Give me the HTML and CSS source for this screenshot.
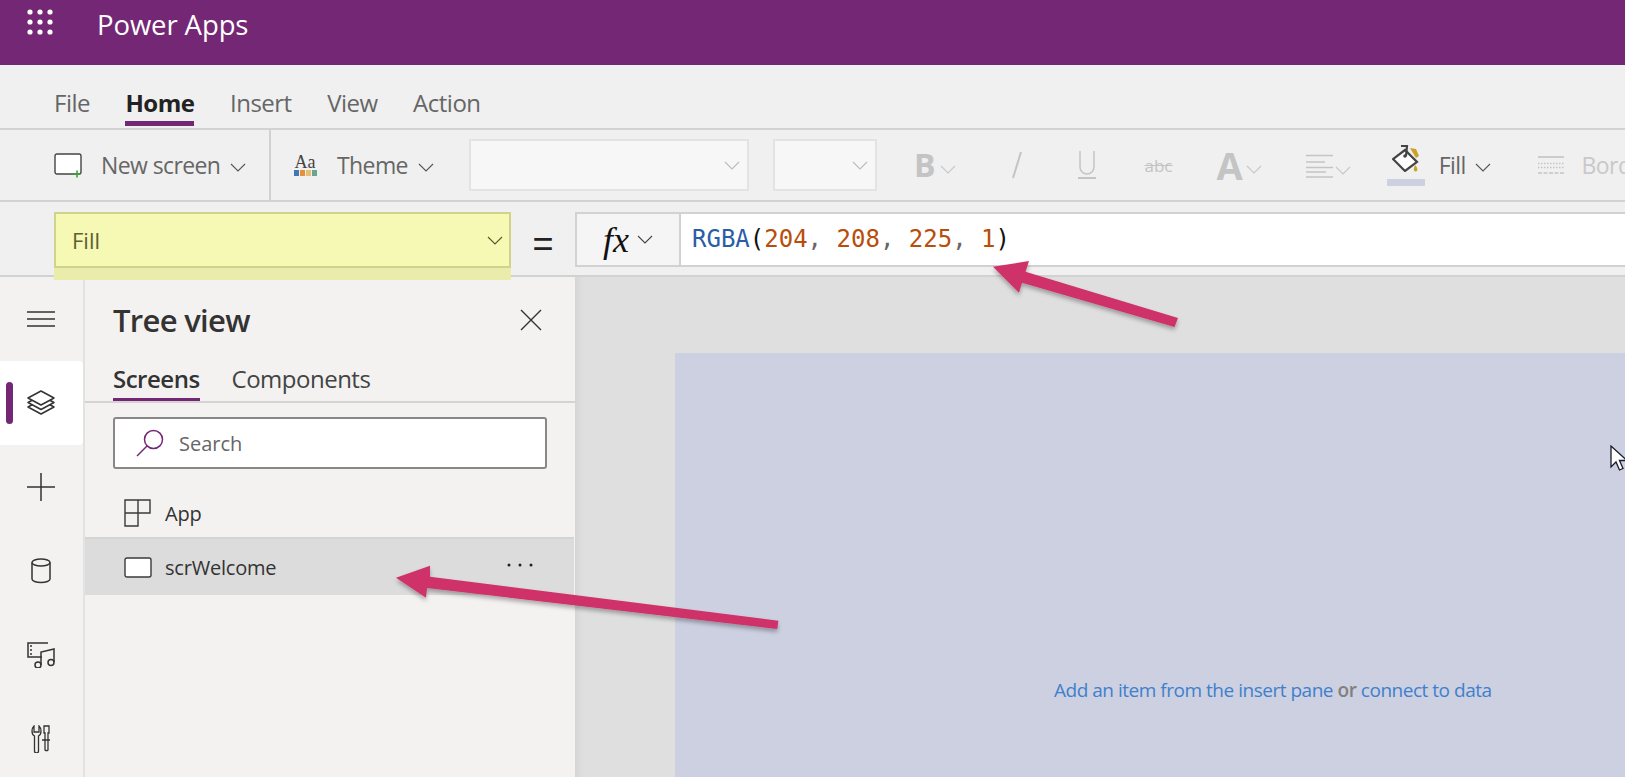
FILE: index.html
```html
<!DOCTYPE html>
<html lang="en">
<head>
<meta charset="utf-8">
<title>Power Apps</title>
<link rel="stylesheet" href="styles.css">
</head>
<body>
<div class="app">
  <header class="topbar">
    <svg class="waffle" width="28" height="28" viewBox="0 0 28 28"><g fill="#fff"><circle cx="3" cy="3" r="2.6"/><circle cx="13" cy="3" r="2.6"/><circle cx="23" cy="3" r="2.6"/><circle cx="3" cy="13" r="2.6"/><circle cx="13" cy="13" r="2.6"/><circle cx="23" cy="13" r="2.6"/><circle cx="3" cy="23" r="2.6"/><circle cx="13" cy="23" r="2.6"/><circle cx="23" cy="23" r="2.6"/></g></svg>
    <span class="brand">Power Apps</span>
  </header>

  <nav class="menu">
    <span class="menu-item">File</span>
    <span class="menu-item active">Home</span>
    <span class="menu-item">Insert</span>
    <span class="menu-item">View</span>
    <span class="menu-item">Action</span>
  </nav>

  <div class="toolbar">
    <div class="tool-group first">
      <svg class="ico-new" width="30" height="26" viewBox="0 0 30 26"><rect x="1" y="1" width="26" height="20" rx="2" fill="#fff" stroke="#444" stroke-width="1.4"/><path d="M23 24.500v-7M19.500 21h7" stroke="#3aa63a" stroke-width="1.600"/></svg>
      <span class="tool-label">New screen</span>
      <svg class="chev" width="16" height="9" viewBox="0 0 16 9"><path d="M1 1l7 7 7-7" fill="none" stroke="#555" stroke-width="1.100"/></svg>
    </div>
    <div class="tool-group second">
      <span class="theme-ico"><span class="aa">Aa</span><span class="swatches"><i class="s1"></i><i class="s2"></i><i class="s3"></i><i class="s4"></i></span></span>
      <span class="tool-label">Theme</span>
      <svg class="chev" width="16" height="9" viewBox="0 0 16 9"><path d="M1 1l7 7 7-7" fill="none" stroke="#555" stroke-width="1.100"/></svg>
    </div>
    <div class="select font-select"><svg class="chev" width="16" height="9" viewBox="0 0 16 9"><path d="M1 1l7 7 7-7" fill="none" stroke="#bbb" stroke-width="1.100"/></svg></div>
    <div class="select size-select"><svg class="chev" width="16" height="9" viewBox="0 0 16 9"><path d="M1 1l7 7 7-7" fill="none" stroke="#bbb" stroke-width="1.100"/></svg></div>
    <span class="fmt bold">B</span>
    <svg class="chev dim c-b" width="16" height="9" viewBox="0 0 16 9"><path d="M1 1l7 7 7-7" fill="none" stroke="#c8c8c8" stroke-width="1.100"/></svg>
    <svg class="fmt-ico i-italic" width="12" height="28" viewBox="0 0 12 28"><path d="M10 1L2 27" stroke="#c4c4c4" stroke-width="2"/></svg>
    <svg class="fmt-ico i-under" width="20" height="30" viewBox="0 0 20 30"><path d="M3 1v16a7 7 0 0 0 14 0V1" fill="none" stroke="#c4c4c4" stroke-width="1.500"/><path d="M1 28h18" stroke="#c4c4c4" stroke-width="2"/></svg>
    <span class="strike">abc</span>
    <span class="fmt big">A</span>
    <svg class="chev dim c-a" width="16" height="9" viewBox="0 0 16 9"><path d="M1 1l7 7 7-7" fill="none" stroke="#c8c8c8" stroke-width="1.100"/></svg>
    <svg class="fmt-ico i-align" width="28" height="24" viewBox="0 0 28 24"><path d="M0 1.500h27M0 8h19M0 13.500h27M0 18h20M0 23h27" stroke="#c4c4c4" stroke-width="1.600"/></svg>
    <svg class="chev dim c-al" width="16" height="9" viewBox="0 0 16 9"><path d="M1 1l7 7 7-7" fill="none" stroke="#c8c8c8" stroke-width="1.100"/></svg>
    <div class="fill-ico">
      <svg width="28" height="27" viewBox="0 0 28 27"><path d="M13 5L1 14l12 12 12-9z" fill="#fff" stroke="#444" stroke-width="2.200"/><path d="M9 1h6l-1 10" fill="none" stroke="#444" stroke-width="2.200"/><circle cx="13" cy="11" r="1.800" fill="#444"/><path d="M18 3l6 1 3 7-3 2z" fill="#c9a227"/><path d="M23 20c2 2 3 4 2 6-2 1-4 0-3-3z" fill="#c9a227"/></svg>
      <span class="fill-swatch"></span>
    </div>
    <span class="tool-label fill-label">Fill</span>
    <svg class="chev" width="16" height="9" viewBox="0 0 16 9"><path d="M1 1l7 7 7-7" fill="none" stroke="#555" stroke-width="1.100"/></svg>
    <svg class="fmt-ico i-border" width="26" height="20" viewBox="0 0 26 20"><path d="M0 1h26" stroke="#c4c4c4" stroke-width="1.600"/><path d="M0 7.500h26M0 11.500h26" stroke="#c4c4c4" stroke-width="1.500" stroke-dasharray="1.500 1.500"/><path d="M0 17h26" stroke="#c4c4c4" stroke-width="1.600" stroke-dasharray="4 1.500"/></svg>
    <span class="tool-label dim-label">Border</span>
  </div>

  <div class="formula">
    <div class="prop-wrap">
      <div class="prop">
        <span>Fill</span>
        <svg width="16" height="9" viewBox="0 0 16 9"><path d="M1 1l7 7 7-7" fill="none" stroke="#55582a" stroke-width="1.100"/></svg>
      </div>
    </div>
    <span class="equals">=</span>
    <div class="fx">
      <span class="fx-text">fx</span>
      <svg width="16" height="9" viewBox="0 0 16 9"><path d="M1 1l7 7 7-7" fill="none" stroke="#444" stroke-width="1.100"/></svg>
    </div>
    <div class="expr"><span class="k">RGBA</span>(<span class="n">204</span><span class="c">,</span> <span class="n">208</span><span class="c">,</span> <span class="n">225</span><span class="c">,</span> <span class="n">1</span>)</div>
  </div>

  <main class="work">
    <aside class="rail">
      <div class="rail-btn"><svg width="28" height="18" viewBox="0 0 28 18"><path d="M0 2h28M0 9h28M0 16h28" stroke="#333" stroke-width="1.500"/></svg></div>
      <div class="rail-btn on"><span class="pill"></span><svg width="28" height="26" viewBox="0 0 28 26"><g fill="#fff" stroke="#333" stroke-width="1.500" stroke-linejoin="round"><path d="M1 17l13 7 13-7-13-7z"/><path d="M1 12.500l13 7 13-7-13-7z"/><path d="M1 8l13 7 13-7L14 1z"/></g></svg></div>
      <div class="rail-btn"><svg width="28" height="28" viewBox="0 0 28 28"><path d="M0 14h28M14 0v28" stroke="#333" stroke-width="1.500"/></svg></div>
      <div class="rail-btn"><svg width="22" height="26" viewBox="0 0 22 26"><ellipse cx="11" cy="4.500" rx="9" ry="3.500" fill="none" stroke="#333" stroke-width="1.500"/><path d="M2 4.500V21c0 2 4 3.500 9 3.500s9-1.500 9-3.500V4.500" fill="none" stroke="#333" stroke-width="1.500"/></svg></div>
      <div class="rail-btn"><svg width="30" height="26" viewBox="0 0 30 26"><path d="M22 1H2v14h14" fill="none" stroke="#333" stroke-width="1.500"/><path d="M5 3v10" stroke="#333" stroke-width="1.500" stroke-dasharray="2 2"/><path d="M15 23V10l13-3v13" fill="none" stroke="#333" stroke-width="1.500"/><circle cx="12" cy="23" r="3" fill="none" stroke="#333" stroke-width="1.500"/><circle cx="25" cy="20.500" r="3" fill="none" stroke="#333" stroke-width="1.500"/></svg></div>
      <div class="rail-btn"><svg width="20" height="28" viewBox="0 0 20 28"><path d="M3.500 11v15a2 2 0 0 0 4 0V11c2-1 2.500-3 2.500-5 0-2-1-4-2-5v6H3V1C2 2 1 4 1 6c0 2 .5 4 2.500 5z" fill="none" stroke="#333" stroke-width="1.300"/><path d="M13 1h5v7h-1v17a2 2 0 0 1-3 0V8h-1zM11 15h8" fill="none" stroke="#333" stroke-width="1.300"/></svg></div>
    </aside>

    <section class="panel">
      <div class="panel-head">
        <h2>Tree view</h2>
        <svg width="24" height="24" viewBox="0 0 24 24"><path d="M2 2l20 20M22 2L2 22" stroke="#333" stroke-width="1.400"/></svg>
      </div>
      <div class="tabs">
        <span class="tab on">Screens</span>
        <span class="tab">Components</span>
      </div>
      <div class="search">
        <svg width="30" height="30" viewBox="0 0 30 30"><circle cx="18.500" cy="11.500" r="9" fill="none" stroke="#742774" stroke-width="1.500"/><path d="M12 18L2 28" stroke="#742774" stroke-width="1.500"/></svg>
        <span>Search</span>
      </div>
      <div class="tree-row app-row">
        <svg width="28" height="28" viewBox="0 0 28 28"><path d="M1 1h25v13H14v13H1zM14 1v13M1 14h13" fill="none" stroke="#3a3a3a" stroke-width="1.400"/></svg>
        <span>App</span>
      </div>
      <div class="tree-row selected">
        <svg width="28" height="22" viewBox="0 0 28 22"><rect x="1" y="1" width="26" height="19" rx="2" fill="#fff" stroke="#3a3a3a" stroke-width="1.400"/></svg>
        <span>scrWelcome</span>
        <svg class="dots" width="26" height="4" viewBox="0 0 26 4"><circle cx="2" cy="2" r="1.500" fill="#222"/><circle cx="13" cy="2" r="1.500" fill="#222"/><circle cx="24" cy="2" r="1.500" fill="#222"/></svg>
      </div>
    </section>

    <section class="canvas">
      <div class="screen">
        <p class="hint"><span class="link">Add an item from the insert pane</span> <span class="or">or</span> <span class="link">connect to data</span></p>
      </div>
    </section>
  </main>
</div>

<svg class="cursor" width="16" height="28" viewBox="0 0 16 28"><path d="M1 1v21l5-5 3.500 8 3.500-1.500-3.500-8H17z" fill="#fff" stroke="#1a1a2a" stroke-width="1.300"/></svg>

<svg class="arrows" width="1625" height="777" viewBox="0 0 1625 777">
  <defs>
    <filter id="sh" x="-10%" y="-30%" width="120%" height="160%"><feDropShadow dx="0" dy="3" stdDeviation="2" flood-color="#000" flood-opacity=".3"/></filter>
  </defs>
  <g fill="#cf3069" filter="url(#sh)">
    <path d="M993 266.700L1029 261 1025.500 271.700 1178 318 1174.500 327 1022 282.700 1019 292.700z"/>
    <path d="M396 577.700L430 565.700 430 576.700 778.400 620.800 777.300 629 427 588 426 597.700z"/>
  </g>
</svg>
</body>
</html>
```

FILE: styles.css
```css
* { box-sizing: border-box; }
html, body { margin: 0; padding: 0; height: 100%; overflow: hidden; }
body { font-family: "Open Sans", "Noto Sans", sans-serif; background: #f0f0f0; color: #333; }
.app { display: flex; flex-direction: column; height: 777px; width: 1625px; overflow: hidden; }

.topbar { flex: none; height: 65px; background: #742774; display: flex; align-items: flex-start; color: #fff; }
.waffle { margin: 9px 0 0 27px; }
.brand { margin: 6px 0 0 42px; font-size: 27.5px; line-height: 38px; font-weight: 500; letter-spacing: -.1px; }

.menu { flex: none; height: 65px; background: #f0f0f0; border-bottom: 2px solid #d2d2d2; display: flex; align-items: flex-start; padding: 21px 0 0 54px; gap: 35.5px; }
.menu-item { font-size: 24px; line-height: 33px; height: 39px; color: #666; letter-spacing: -.5px; }
.menu-item.active { color: #222; font-weight: 700; border-bottom: 5px solid #742774; height: 40px; }

.toolbar { flex: none; height: 72px; background: #f0f0f0; border-bottom: 2px solid #d2d2d2; display: flex; align-items: center; white-space: nowrap; overflow: hidden; }
.toolbar > * { flex: none; }
.tool-group { display: flex; align-items: center; height: 100%; }
.tool-group.first { width: 271px; padding-left: 54px; border-right: 2px solid #d2d2d2; }
.tool-group.second { padding-left: 23px; width: 198px; }
.tool-label { font-size: 23px; color: #666; letter-spacing: -.6px; }
.ico-new { margin-right: 17px; margin-top: 2px; }
.tool-group .chev { margin: 4px 0 0 10px; }
.theme-ico { display: inline-flex; flex-direction: column; align-items: center; margin-right: 21px; width: 22px; }
.aa { font-family: "Liberation Serif", serif; font-size: 18px; line-height: 16px; color: #444; }
.swatches { display: flex; gap: 1px; }
.swatches i { width: 5px; height: 6px; display: block; }
.s1 { background: #3f78b5; } .s2 { background: #e78f3c; } .s3 { background: #e8bf72; } .s4 { background: #69a58f; }

.select { height: 52px; background: #f7f7f7; border: 2px solid #e3e3e3; display: flex; align-items: center; justify-content: flex-end; padding-right: 7px; }
.font-select { width: 280px; }
.size-select { width: 104px; margin-left: 24px; }
.fmt { color: #c4c4c4; font-weight: 700; }
.bold { font-size: 32px; margin-left: 37px; line-height: 40px; }
.chev.dim.c-b { margin: 8px 0 0 4px; }
.i-italic { margin-left: 55px; }
.i-under { margin-left: 54px; }
.strike { margin-left: 48px; font-size: 17px; color: #c4c4c4; text-decoration: line-through; }
.big { font-size: 38px; margin-left: 44px; line-height: 40px; }
.chev.dim.c-a { margin: 8px 0 0 3px; }
.i-align { margin-left: 44px; margin-top: 2px; }
.chev.dim.c-al { margin: 10px 0 0 1px; }
.fill-ico { display: flex; flex-direction: column; align-items: center; width: 38px; margin-left: 36px; margin-top: 1px; }
.fill-ico svg { display: block; }
.fill-swatch { width: 38px; height: 7px; background: #ccd0e1; margin-top: 7px; }
.fill-label { margin-left: 14px; }
.fill-label + .chev { margin: 4px 0 0 9px; }
.i-border { margin-left: 47px; margin-top: 2px; }
.dim-label { color: #c9c9c9; margin-left: 18px; }

.formula { flex: none; height: 75px; background: #f0f0f0; border-bottom: 2px solid #d2d2d2; display: flex; align-items: flex-start; padding-top: 10px; }
.prop-wrap { margin-left: 54px; width: 457px; height: 68px; background: #e9ecaa; flex: none; position: relative; z-index: 1; }
.prop { height: 56px; background: #f5f9b3; border: 2px solid #d0d48a; display: flex; align-items: center; justify-content: space-between; padding: 0 6px 0 16px; font-size: 22px; line-height: 50px; color: #5d6030; }
.equals { width: 64px; flex: none; text-align: center; font-size: 36px; line-height: 64px; color: #222; font-family: "Liberation Sans", sans-serif; }
.fx { flex: none; width: 106px; height: 55px; border: 2px solid #d2d2d2; background: #f5f5f5; display: flex; align-items: center; justify-content: center; gap: 8px; }
.fx-text { font-family: "Liberation Serif", serif; font-style: italic; font-size: 36px; color: #111; line-height: 40px; }
.expr { flex: 1; height: 55px; background: #fff; border-top: 2px solid #d2d2d2; border-bottom: 2px solid #d2d2d2; padding-left: 11px; font-family: "DejaVu Sans Mono", monospace; font-size: 24px; line-height: 50px; color: #111; }
.k { color: #2a5da6; } .n { color: #b94d0a; } .c { color: #666; }

.work { flex: 1; min-height: 0; display: flex; }
.rail { flex: none; width: 85px; background: #f3f2f1; border-right: 2px solid #e2e2e2; display: flex; flex-direction: column; padding-top: 0; }
.rail-btn { height: 84px; display: flex; align-items: center; justify-content: center; padding-right: 2px; position: relative; flex: none; }
.rail-btn.on { background: #fff; border-radius: 0 4px 4px 0; }
.pill { position: absolute; left: 6px; top: 21px; width: 7px; height: 42px; background: #742774; border-radius: 4px; }

.panel { flex: none; width: 490px; background: #f3f2f1; display: flex; flex-direction: column; }
.panel-head { height: 82px; display: flex; align-items: center; justify-content: space-between; padding: 4px 32px 0 28px; flex: none; }
.panel-head h2 { margin: 0; font-size: 31px; font-weight: 600; color: #333; letter-spacing: -.7px; line-height: 60px; }
.tabs { flex: none; height: 44px; display: flex; align-items: flex-end; padding-left: 28px; gap: 32px; border-bottom: 2px solid #d6d4d2; }
.tab { font-size: 24px; color: #444; line-height: 40px; height: 42px; letter-spacing: -.5px; }
.tab.on { font-weight: 600; color: #333; border-bottom: 3px solid #742774; height: 42px; }
.search { flex: none; margin: 14px 0 0 28px; width: 434px; height: 52px; background: #fff; border: 2px solid #8a8886; border-radius: 3px; display: flex; align-items: center; padding-left: 20px; gap: 14px; font-size: 20px; color: #666; }
.tree-row { flex: none; display: flex; align-items: center; font-size: 20px; color: #333; padding-left: 39px; }
.tree-row span { margin-left: 13px; letter-spacing: -.2px; }
.app-row { height: 68px; padding-top: 20px; }
.selected { height: 58px; background: #dcdcdc; border-top: 2px solid #d4d4d4; margin-right: 1px; padding-top: 1px; }
.selected span { flex: 1; }
.dots { margin: 0 41px 6px 0; }

.canvas { flex: 1; background: #dfdfdf; padding: 76px 0 0 100px; overflow: hidden; box-shadow: inset 10px 0 8px -8px #d2d2d2; }
.screen { height: 100%; background: #ccd0e1; position: relative; }
.hint { margin: 0; padding: 324px 0 0 379px; font-size: 19px; line-height: 26px; letter-spacing: -.48px; white-space: nowrap; }
.link { color: #3f80cc; }
.or { color: #808080; font-weight: 600; }

.cursor { position: absolute; left: 1610px; top: 445px; }
.arrows { position: absolute; left: 0; top: 0; pointer-events: none; }
```
